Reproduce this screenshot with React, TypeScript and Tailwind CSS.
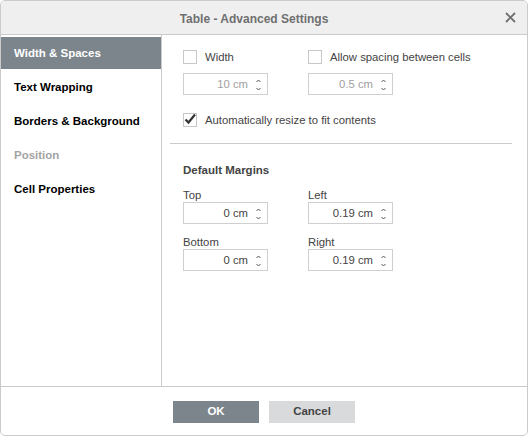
import React from "react";

const font = { fontFamily: '"Liberation Sans", Arial, sans-serif' };

function Spin() {
  return (
    <svg width="7" height="14" viewBox="0 0 7 14" className="absolute right-[5px] top-[4px]">
      <path d="M1.5 4 L3.5 2 L5.5 4" fill="none" stroke="#555" strokeWidth="1" />
      <path d="M1.5 10 L3.5 12 L5.5 10" fill="none" stroke="#555" strokeWidth="1" />
    </svg>
  );
}

function Input({ value, disabled }: { value: string; disabled?: boolean }) {
  return (
    <div className="relative w-[85px] h-[22px] border border-[#cfcfcf] bg-white flex items-center justify-end pr-[19px]">
      <span className={`text-[11.3px] ${disabled ? "text-[#a0a0a0]" : "text-[#444]"}`}>{value}</span>
      <Spin />
    </div>
  );
}

function Check({ checked }: { checked?: boolean }) {
  return (
    <div className="relative w-[14px] h-[14px] border border-[#c8c8c8] bg-white shrink-0">
      {checked && (
        <svg width="14" height="14" viewBox="0 0 14 14" className="absolute left-[-1px] top-[-2px]">
          <path d="M2.5 7.5 L5.5 10.5 L12 2.5" fill="none" stroke="#333" strokeWidth="2.2" />
        </svg>
      )}
    </div>
  );
}

export default function App() {
  const items = [
    { t: "Width & Spaces", sel: true },
    { t: "Text Wrapping" },
    { t: "Borders & Background" },
    { t: "Position", dis: true },
    { t: "Cell Properties" },
  ];
  return (
    <div style={font} className="w-[528px] h-[436px] bg-white">
      <div className="w-[528px] h-[436px] border border-[#cbcbcb] rounded-[5px] flex flex-col overflow-hidden">
        <div className="h-[34px] bg-[#efefef] border-b border-[#cbcbcb] flex items-center justify-center relative shrink-0 pr-[20px] pt-[2px]">
          <span className="text-[12px] font-bold text-[#6f6f6f]">Table - Advanced Settings</span>
          <svg width="11" height="11" viewBox="0 0 11 11" className="absolute right-[11px] top-[11px]">
            <path d="M1 1 L10 10 M10 1 L1 10" stroke="#6f6f6f" strokeWidth="1.8" />
          </svg>
        </div>
        <div className="flex flex-1 min-h-0">
          <div className="w-[161px] border-r border-[#cbcbcb] pt-[2px] flex flex-col gap-[2px] shrink-0">
            {items.map((it) => (
              <div
                key={it.t}
                className={`h-[32px] pl-[13px] pt-[2px] flex items-center text-[11.5px] font-bold ${
                  it.sel ? "bg-[#7d858c] text-white" : it.dis ? "text-[#a4a4a4]" : "text-[#000]"
                }`}
              >
                {it.t}
              </div>
            ))}
          </div>
          <div className="flex-1 flex flex-col">
            <div className="pl-[21px] pt-[15px]">
              <div className="flex">
                <div className="w-[125px]">
                  <div className="flex items-center h-[14px] gap-[8px]">
                    <Check />
                    <span className="text-[11.3px] text-[#444]">Width</span>
                  </div>
                  <div className="mt-[9px]">
                    <Input value="10 cm" disabled />
                  </div>
                </div>
                <div>
                  <div className="flex items-center h-[14px] gap-[8px]">
                    <Check />
                    <span className="text-[11.3px] text-[#444]">Allow spacing between cells</span>
                  </div>
                  <div className="mt-[9px]">
                    <Input value="0.5 cm" disabled />
                  </div>
                </div>
              </div>
              <div className="flex items-center h-[14px] gap-[8px] mt-[18px]">
                <Check checked />
                <span className="text-[11.3px] text-[#444]">Automatically resize to fit contents</span>
              </div>
            </div>
            <div className="h-px bg-[#cbcbcb] mt-[16px] ml-[8px] mr-[15px]" />
            <div className="pl-[21px] pt-[19px]">
              <div className="text-[11.5px] font-bold text-[#444] leading-[14px]">Default Margins</div>
              <div className="flex mt-[11px]">
                <div className="w-[125px]">
                  <div className="text-[11.3px] text-[#444] leading-[14px]">Top</div>
                  <div><Input value="0 cm" /></div>
                  <div className="text-[11.3px] text-[#444] leading-[14px] mt-[11px]">Bottom</div>
                  <div><Input value="0 cm" /></div>
                </div>
                <div>
                  <div className="text-[11.3px] text-[#444] leading-[14px]">Left</div>
                  <div><Input value="0.19 cm" /></div>
                  <div className="text-[11.3px] text-[#444] leading-[14px] mt-[11px]">Right</div>
                  <div><Input value="0.19 cm" /></div>
                </div>
              </div>
            </div>
          </div>
        </div>
        <div className="h-[49px] border-t border-[#cbcbcb] shrink-0 flex items-start justify-center gap-[10px] pt-[14px]">
          <div className="w-[86px] h-[22px] bg-[#7d858c] text-white text-[11.5px] font-bold flex items-center justify-center">OK</div>
          <div className="w-[86px] h-[22px] bg-[#d8dadc] text-[#444] text-[11.5px] font-bold flex items-center justify-center">Cancel</div>
        </div>
      </div>
    </div>
  );
}
